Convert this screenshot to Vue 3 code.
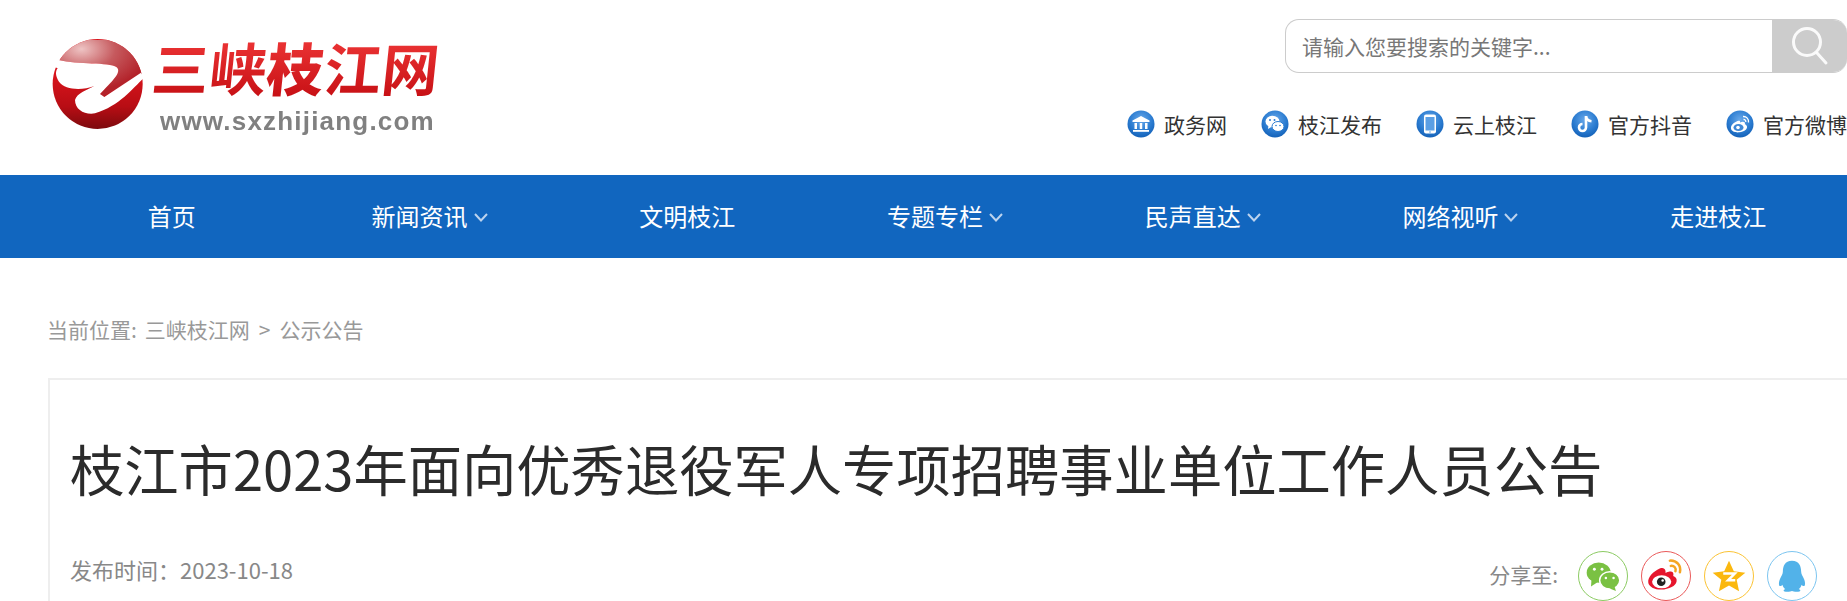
<script setup>
const links = [
  { id: 'bank', text: '政务网' },
  { id: 'wechat', text: '枝江发布' },
  { id: 'phone', text: '云上枝江' },
  { id: 'douyin', text: '官方抖音' },
  { id: 'weibo', text: '官方微博' }
]
const navs = [
  { text: '首页' },
  { text: '新闻资讯', arrow: true },
  { text: '文明枝江' },
  { text: '专题专栏', arrow: true },
  { text: '民声直达', arrow: true },
  { text: '网络视听', arrow: true },
  { text: '走进枝江' }
]
</script>

<template>
  <div class="page">
    <header class="top">
      <a class="logo">
        <svg class="ball" viewBox="0 0 330 315" width="110" height="105">
          <defs>
            <radialGradient id="cap" cx="0.32" cy="0.16" r="0.75">
              <stop offset="0" stop-color="#eec4c4" />
              <stop offset="0.5" stop-color="#c65a5e" />
              <stop offset="1" stop-color="#b3222a" />
            </radialGradient>
            <linearGradient id="bowl" x1="0" y1="0" x2="0" y2="1">
              <stop offset="0.4" stop-color="#d8141c" />
              <stop offset="0.75" stop-color="#b80d14" />
              <stop offset="1" stop-color="#7d0a0e" />
            </linearGradient>
            <clipPath id="ballClip"><circle cx="158" cy="162" r="135" /></clipPath>
          </defs>
          <circle cx="158" cy="162" r="135" fill="url(#bowl)" />
          <path clip-path="url(#ballClip)" d="M23 30H293V130L175 200L165 192C200 155 232 127 215 112C190 95 100 105 40 90L23 100Z" fill="url(#cap)" />
          <path d="M22 108L40 90C100 105 190 95 215 112C232 127 200 155 165 192L178 201L288 128L297 143C260 178 225 226 150 250C120 255 90 240 90 210C95 190 125 180 148 168C110 182 60 180 42 155C32 140 30 125 38 115Z" fill="#fff" />
        </svg>
        <span class="brand">
          <span class="brand-cn">三峡<b class="heavy">枝</b>江网</span>
          <span class="brand-en">www.sxzhijiang.com</span>
        </span>
      </a>
      <div class="tools">
        <form class="search" @submit.prevent>
          <input class="search-input" type="text" placeholder="请输入您要搜索的关键字..." />
          <button class="search-btn" type="submit" aria-label="搜索">
            <svg viewBox="0 0 40 40" width="40" height="40" fill="none" stroke="#fff" stroke-opacity="0.9" stroke-width="3" stroke-linecap="round">
              <circle cx="17" cy="16" r="13.5" />
              <path d="M27 27L36 37" />
            </svg>
          </button>
        </form>
        <ul class="links">
          <li v-for="l in links" :key="l.id" class="link">
            <svg class="link-icon" viewBox="0 0 28 28" width="28" height="28">
              <defs>
                <radialGradient :id="'g-' + l.id" cx="0.5" cy="0.35" r="0.7">
                  <stop offset="0" stop-color="#69a9ea" />
                  <stop offset="0.6" stop-color="#2a7bd0" />
                  <stop offset="1" stop-color="#0f5cb3" />
                </radialGradient>
              </defs>
              <circle cx="14" cy="14" r="13.5" :fill="'url(#g-' + l.id + ')'" />
              <g v-if="l.id === 'bank'" fill="#fff">
                <path d="M14 6L22.5 10.5V12H5.500V10.500Z" />
                <rect x="7.500" y="13" width="2.500" height="6" />
                <rect x="12.750" y="13" width="2.500" height="6" />
                <rect x="18" y="13" width="2.500" height="6" />
                <rect x="6" y="20" width="16" height="1.800" />
              </g>
              <g v-else-if="l.id === 'wechat'">
                <ellipse cx="11.500" cy="11.500" rx="7" ry="5.800" fill="#fff" />
                <path d="M7.500 15L7 19L11 16.500Z" fill="#fff" />
                <ellipse cx="17" cy="16.500" rx="6" ry="5" fill="#fff" stroke="#2a7bd0" stroke-width="1" />
                <circle cx="9" cy="10" r="1" fill="#2a7bd0" />
                <circle cx="13.500" cy="10" r="1" fill="#2a7bd0" />
                <circle cx="15" cy="15.500" r="0.800" fill="#2a7bd0" />
                <circle cx="19" cy="15.500" r="0.800" fill="#2a7bd0" />
              </g>
              <g v-else-if="l.id === 'phone'">
                <rect x="8" y="4.500" width="12" height="19" rx="2" fill="#fff" />
                <rect x="9.500" y="7" width="9" height="13.500" fill="#5b9fe4" />
                <circle cx="14" cy="22" r="0.800" fill="#5b9fe4" />
              </g>
              <g v-else-if="l.id === 'douyin'" fill="none" stroke="#fff" stroke-width="2.600">
                <path d="M15 6V17.500A3.500 3.500 0 1 1 11.500 14" />
                <path d="M15 6.500C15.500 9.500 17.500 11 20.500 11.300" />
              </g>
              <g v-else>
                <path d="M11.500 11C7.500 12.500 4.500 15.500 5 18.500C5.500 21.500 9.500 22.800 13.500 22.300C18 21.700 21.500 19.300 21 16.500C20.700 14.800 18.800 14.300 18.800 14.300C19.500 12.500 18.500 11.500 16.500 11.700C15 11.900 14 12.500 14 12.500C14.500 10.500 13.200 10.300 11.500 11Z" fill="#fff" />
                <ellipse cx="12.500" cy="17.500" rx="5" ry="3.600" fill="#3f88d6" />
                <circle cx="12" cy="17.500" r="1.800" fill="#fff" />
                <path d="M17 6.500C20.500 6.300 23 9 22.500 12.500M17.500 9.500C19 9.300 20 10.500 19.800 12" fill="none" stroke="#fff" stroke-width="1.300" />
              </g>
            </svg>
            <span>{{ l.text }}</span>
          </li>
        </ul>
      </div>
    </header>

    <nav class="nav">
      <a v-for="n in navs" :key="n.text" class="nav-item">
        <span>{{ n.text }}</span>
        <svg v-if="n.arrow" class="nav-arrow" viewBox="0 0 14 9" width="14" height="9" fill="none" stroke="#bcd3ee" stroke-width="2">
          <path d="M1 1L7 7.500L13 1" />
        </svg>
      </a>
    </nav>

    <div class="crumb">
      <span>当前位置:</span>
      <span>三峡枝江网</span>
      <span class="sep">&gt;</span>
      <span>公示公告</span>
    </div>

    <article class="article">
      <h1 class="title">枝江市2023年面向优秀退役军人专项招聘事业单位工作人员公告</h1>
      <div class="meta">
        <span class="date">发布时间：2023-10-18</span>
        <div class="share">
          <span class="share-label">分享至:</span>
          <a class="share-btn wx">
            <svg viewBox="0 0 50 50" width="48" height="48">
              <ellipse cx="20.500" cy="21.500" rx="12.500" ry="10.500" fill="#7ac143" />
              <path d="M13 29L12.500 36L20 31Z" fill="#7ac143" />
              <ellipse cx="32" cy="29.500" rx="10.500" ry="9" fill="#7ac143" stroke="#fff" stroke-width="1.500" />
              <path d="M37 36L38.500 40.500L32 38Z" fill="#7ac143" />
              <circle cx="16" cy="18" r="1.500" fill="#fff" />
              <circle cx="24" cy="18" r="1.500" fill="#fff" />
              <circle cx="28" cy="27" r="1.300" fill="#fff" />
              <circle cx="36" cy="27" r="1.300" fill="#fff" />
            </svg>
          </a>
          <a class="share-btn wb">
            <svg viewBox="0 0 50 50" width="48" height="48">
              <path d="M19 17C12 20 6 26 6.500 31.500C7 37 15 40 23 39C31 38 37 34 36 28.500C35.500 26 32.500 25 32.500 25C33.500 21.500 31.500 20 28 20.500C26 20.800 24.500 21.800 24.500 21.800C25 18 23 15.500 19 17Z" fill="#e6162d" />
              <ellipse cx="20.500" cy="31" rx="10" ry="6.800" fill="#fff" />
              <circle cx="20" cy="31" r="4.500" fill="#222" />
              <circle cx="21.500" cy="29.800" r="1.300" fill="#fff" />
              <path d="M29 9C36 8.500 41 14 39.500 21M30 14.500C33.500 14 36 17 34.800 20" fill="none" stroke="#f5a623" stroke-width="2.600" stroke-linecap="round" />
            </svg>
          </a>
          <a class="share-btn qz">
            <svg viewBox="0 0 50 50" width="48" height="48">
              <path d="M25 9L30 20L42 21.500L33 29L35.500 41L25 35L14.500 41L17 29L8 21.500L20 20Z" fill="#fbb80f" />
              <path d="M19 22.500H31L24 29.500H31.500" fill="none" stroke="#fff" stroke-width="2.600" />
            </svg>
          </a>
          <a class="share-btn qq">
            <svg viewBox="0 0 50 50" width="48" height="48">
              <path d="M25 9C17.500 9 15.500 15 15.500 20C15.500 23 14 24.500 12.500 28C11 31.500 11 35 12.500 35.500C13.700 35.800 15 34 15 34C15.500 36 17 38 18 38.500C15.500 39.500 15.500 41.500 20 41.500C22.500 41.500 24 40.800 25 40.500C26 40.800 27.500 41.500 30 41.500C34.500 41.500 34.500 39.500 32 38.500C33 38 34.500 36 35 34C35 34 36.300 35.800 37.500 35.500C39 35 39 31.500 37.500 28C36 24.500 34.500 23 34.500 20C34.500 15 32.500 9 25 9Z" fill="#52b2e9" />
            </svg>
          </a>
        </div>
      </div>
    </article>
  </div>
</template>

<style>
html, body { margin: 0; background: #fff; overflow: hidden; }
</style>

<style scoped>
.page {
  height: 601px;
  display: flex;
  flex-direction: column;
  overflow: hidden;
  font-family: "Noto Sans CJK SC", "Noto Sans", sans-serif;
  color: #333;
  background: #fff;
}
.top {
  height: 175px;
  flex: none;
  display: flex;
  justify-content: space-between;
  align-items: flex-start;
}
.logo {
  display: flex;
  align-items: flex-start;
  margin: 30px 0 0 45px;
  filter: blur(0.4px);
}
.ball { display: block; flex: none; }
.brand {
  display: flex;
  flex-direction: column;
}
.brand-cn {
  width: 296px;
  height: 72px;
  margin-left: -6px;
  font-size: 57px;
  line-height: 72px;
  font-weight: 700;
  letter-spacing: 0.4px;
  white-space: nowrap;
  transform: skewX(-6deg);
  transform-origin: left bottom;
  background: linear-gradient(#f23a3a, #c40d12);
  -webkit-background-clip: text;
  background-clip: text;
  color: transparent;
}
.heavy { font-weight: 900; }
.brand-en {
  margin: 7px 0 0 5px;
  font-family: "Liberation Sans", Arial, sans-serif;
  font-size: 26px;
  line-height: 24px;
  font-weight: 700;
  color: #808080;
  letter-spacing: 1.2px;
  white-space: nowrap;
}
.tools {
  display: flex;
  flex-direction: column;
  align-items: flex-end;
  padding-top: 19px;
}
.search {
  display: flex;
  width: 562px;
  height: 54px;
  box-sizing: border-box;
  border: 1px solid #ccc;
  border-right: 0;
  border-radius: 14px;
  overflow: hidden;
}
.search-input {
  flex: 1;
  min-width: 0;
  border: 0;
  outline: 0;
  padding: 0 16px;
  font: 21px "Noto Sans CJK SC", sans-serif;
  color: #777;
  background: transparent;
}
.search-input::placeholder { color: #777; opacity: 1; }
.search-btn {
  width: 75px;
  flex: none;
  border: 0;
  padding: 0;
  margin: -1px 0;
  background: #ccc;
  display: flex;
  align-items: center;
  justify-content: center;
}
.links {
  display: flex;
  gap: 34px;
  list-style: none;
  margin: 37px 0 0;
  padding: 0;
}
.link {
  display: flex;
  align-items: center;
  gap: 9px;
  font-size: 21px;
  line-height: 28px;
  color: #333;
  white-space: nowrap;
}
.link-icon { flex: none; }
.nav {
  height: 83px;
  flex: none;
  padding-left: 43px;
  display: flex;
  background: #1166bf;
}
.nav-item {
  flex: 1;
  display: flex;
  align-items: center;
  justify-content: center;
  gap: 6px;
  padding-bottom: 2px;
  font-size: 24px;
  color: #fff;
  white-space: nowrap;
}
.nav-arrow { margin-top: 4px; }
.crumb {
  display: flex;
  gap: 8px;
  margin: 55px 0 0 47px;
  font-size: 21px;
  line-height: 32px;
  color: #999;
}
.sep { margin: 0 1px; }
.article {
  flex: 1;
  margin: 33px 0 0 48px;
  padding: 50px 0 0 20px;
  border-top: 2px solid #eee;
  border-left: 2px solid #eee;
}
.title {
  margin: 0;
  font-size: 54.3px;
  line-height: 76px;
  font-weight: 400;
  color: #2b2b2b;
  white-space: nowrap;
}
.meta {
  display: flex;
  justify-content: space-between;
  align-items: flex-start;
  margin-top: 47px;
  padding-right: 30px;
}
.date {
  font-size: 22px;
  line-height: 32px;
  color: #888;
}
.share {
  display: flex;
  align-items: center;
  gap: 13px;
  margin-top: -2px;
}
.share-label {
  font-size: 21px;
  color: #888;
  margin-right: 7px;
  margin-top: -4px;
}
.share-btn {
  width: 50px;
  height: 50px;
  box-sizing: border-box;
  border-radius: 50%;
  border: 1.500px solid #ccc;
  display: flex;
  align-items: center;
  justify-content: center;
}
.wx { border-color: #8ccb63; }
.wb { border-color: #ea5a5a; }
.qz { border-color: #fbc334; }
.qq { border-color: #7cc5f0; }
</style>
